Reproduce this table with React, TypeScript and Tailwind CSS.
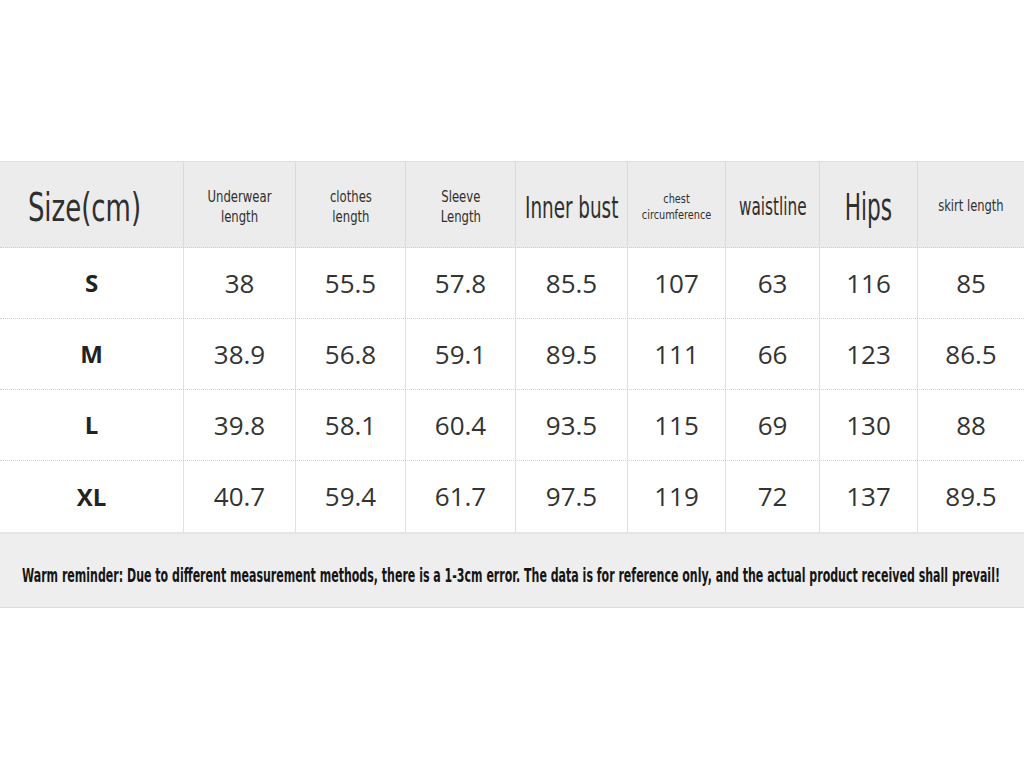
import React from "react";

const cols = "grid grid-cols-[184px_112px_110px_110px_112px_98px_94px_98px_106px]";
const cond = { fontFamily: '"DejaVu Sans Condensed", "DejaVu Sans", sans-serif', fontStretch: "condensed" as const };

const rows: [string, string[]][] = [
  ["S", ["38", "55.5", "57.8", "85.5", "107", "63", "116", "85"]],
  ["M", ["38.9", "56.8", "59.1", "89.5", "111", "66", "123", "86.5"]],
  ["L", ["39.8", "58.1", "60.4", "93.5", "115", "69", "130", "88"]],
  ["XL", ["40.7", "59.4", "61.7", "97.5", "119", "72", "137", "89.5"]],
];

const cell = "flex items-center justify-center text-center border-r border-[#dadada]";

export default function App() {
  return (
    <div className="w-[1024px] h-[768px] bg-white flex flex-col overflow-hidden">
      <div className="h-[161px]" />
      <div className="border-t border-[#dcdcdc]">
        <div className={`${cols} h-[86px] bg-[#ececec] text-[#2f2f2f] border-b border-dotted border-[#cfcfcf]`} style={cond}>
          <div className={`${cell} pr-[14px]`}><span className="inline-block whitespace-nowrap text-[39px] scale-x-[0.74] pt-[8px]">Size(cm)</span></div>
          <div className={cell}><span className="inline-block whitespace-nowrap text-[16px] leading-[20px] scale-x-[0.81] pt-[4px]">Underwear<br />length</span></div>
          <div className={cell}><span className="inline-block whitespace-nowrap text-[16px] leading-[20px] scale-x-[0.81] pt-[4px]">clothes<br />length</span></div>
          <div className={cell}><span className="inline-block whitespace-nowrap text-[16px] leading-[20px] scale-x-[0.81] pt-[4px]">Sleeve<br />Length</span></div>
          <div className={cell}><span className="inline-block whitespace-nowrap text-[30px] scale-x-[0.68] pt-[6px]">Inner bust</span></div>
          <div className={cell}><span className="inline-block whitespace-nowrap text-[12px] leading-[16px] scale-x-[0.9] pt-[4px]">chest<br />circumference</span></div>
          <div className={cell}><span className="inline-block whitespace-nowrap text-[25px] scale-x-[0.68] pt-[4px]">waistline</span></div>
          <div className={cell}><span className="inline-block whitespace-nowrap text-[37px] scale-x-[0.65] pt-[6px]">Hips</span></div>
          <div className="flex items-center justify-center"><span className="inline-block whitespace-nowrap text-[16px] scale-x-[0.8] pt-[2px]">skirt length</span></div>
        </div>
        {rows.map(([size, vals], i) => (
          <div key={size} className={`${cols} h-[71px] bg-white ${i < 3 ? "border-b border-dotted border-[#cfcfcf]" : ""}`} style={{ fontFamily: '"Open Sans", "DejaVu Sans", sans-serif' }}>
            <div className="flex items-center justify-center text-[24px] font-bold text-[#222] border-r border-[#e0e0e0]">{size}</div>
            {vals.map((v, j) => (
              <div key={j} className={`flex items-center justify-center text-[26px] text-[#333] ${j < 7 ? "border-r border-[#e0e0e0]" : ""}`}>{v}</div>
            ))}
          </div>
        ))}
      </div>
      <div className="h-[76px] bg-[#eeeeee] border-t-2 border-[#e4e4e4] border-b border-b-[#dddddd] flex items-center pl-[22px] pt-[10px] overflow-hidden">
        <span className="inline-block whitespace-nowrap origin-left scale-x-[0.645] text-[19px] font-bold text-[#151515]" style={cond}>
          Warm reminder: Due to different measurement methods, there is a 1-3cm error. The data is for reference only, and the actual product received shall prevail!
        </span>
      </div>
    </div>
  );
}
